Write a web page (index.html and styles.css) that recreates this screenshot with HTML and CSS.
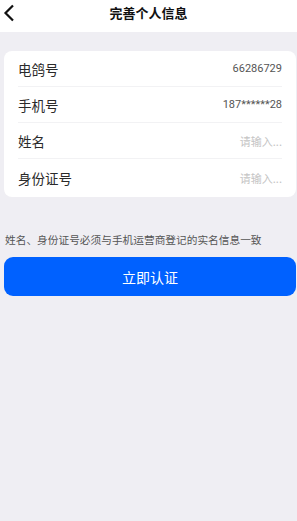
FILE: index.html
```html
<!DOCTYPE html>
<html lang="zh-CN">
<head>
    <meta charset="UTF-8" />
    <meta name="viewport" content="width=device-width, initial-scale=1.0"/>
    <title>完善个人信息</title>
    <link rel="stylesheet" href="styles.css">
</head>
<body>
<div class="header">
    <svg class="back" width="12" height="18" viewBox="0 0 12 18">
        <path d="M10 1.5 L2.5 9 L10 16.5" fill="none" stroke="#111" stroke-width="2.2"/>
    </svg>
    <h1 class="title">完善个人信息</h1>
</div>

<div class="card">
    <div class="row">
        <span class="label">电鸽号</span>
        <span class="value">66286729</span>
    </div>
    <div class="row">
        <span class="label">手机号</span>
        <span class="value">187******28</span>
    </div>
    <div class="row">
        <span class="label">姓名</span>
        <input class="field" type="text" placeholder="请输入...">
    </div>
    <div class="row">
        <span class="label">身份证号</span>
        <input class="field" type="text" placeholder="请输入...">
    </div>
</div>

<p class="notice">姓名、身份证号必须与手机运营商登记的实名信息一致</p>

<button class="submit">立即认证</button>
</body>
</html>
```

FILE: styles.css
```css
body {
    margin: 0;
    background: #efeef3;
    font-family: "Noto Sans CJK SC", "Noto Sans", sans-serif;
    color: #222;
}

.header {
    position: relative;
    height: 32px;
    background: #ffffff;
    display: flex;
    align-items: center;
    justify-content: center;
}

.back {
    position: absolute;
    left: 3px;
    top: 4px;
}

.title {
    margin: 0;
    font-size: 13px;
    font-weight: bold;
    color: #111;
    line-height: 1;
    margin-top: -7px;
}

.card {
    margin: 19px 1px 0 4px;
    background: #ffffff;
    border-radius: 8px;
    padding: 0 14px;
}

.row {
    display: flex;
    align-items: center;
    justify-content: space-between;
    height: 35px;
    border-bottom: 1px solid #f2f2f4;
}

.row:last-child {
    border-bottom: none;
    height: 38px;
}

.label {
    font-size: 13.5px;
    color: #2a2a2a;
}

.value {
    font-size: 11px;
    color: #555;
    font-family: "Roboto", "Noto Sans", sans-serif;
}

.field {
    border: none;
    outline: none;
    text-align: right;
    width: 120px;
    padding: 0;
    font-size: 11px;
    font-family: "Noto Sans CJK SC", sans-serif;
    background: transparent;
}

.field::placeholder {
    color: #c4c4c4;
}

.notice {
    margin: 36px 0 0 5px;
    font-size: 10.7px;
    color: #555;
    line-height: 14px;
}

.submit {
    display: block;
    margin: 10px 1px 0 4px;
    width: 292px;
    height: 39px;
    border: none;
    border-radius: 9px;
    background: #0061ff;
    color: #ffffff;
    font-size: 14px;
    font-family: "Noto Sans CJK SC", sans-serif;
}
```
